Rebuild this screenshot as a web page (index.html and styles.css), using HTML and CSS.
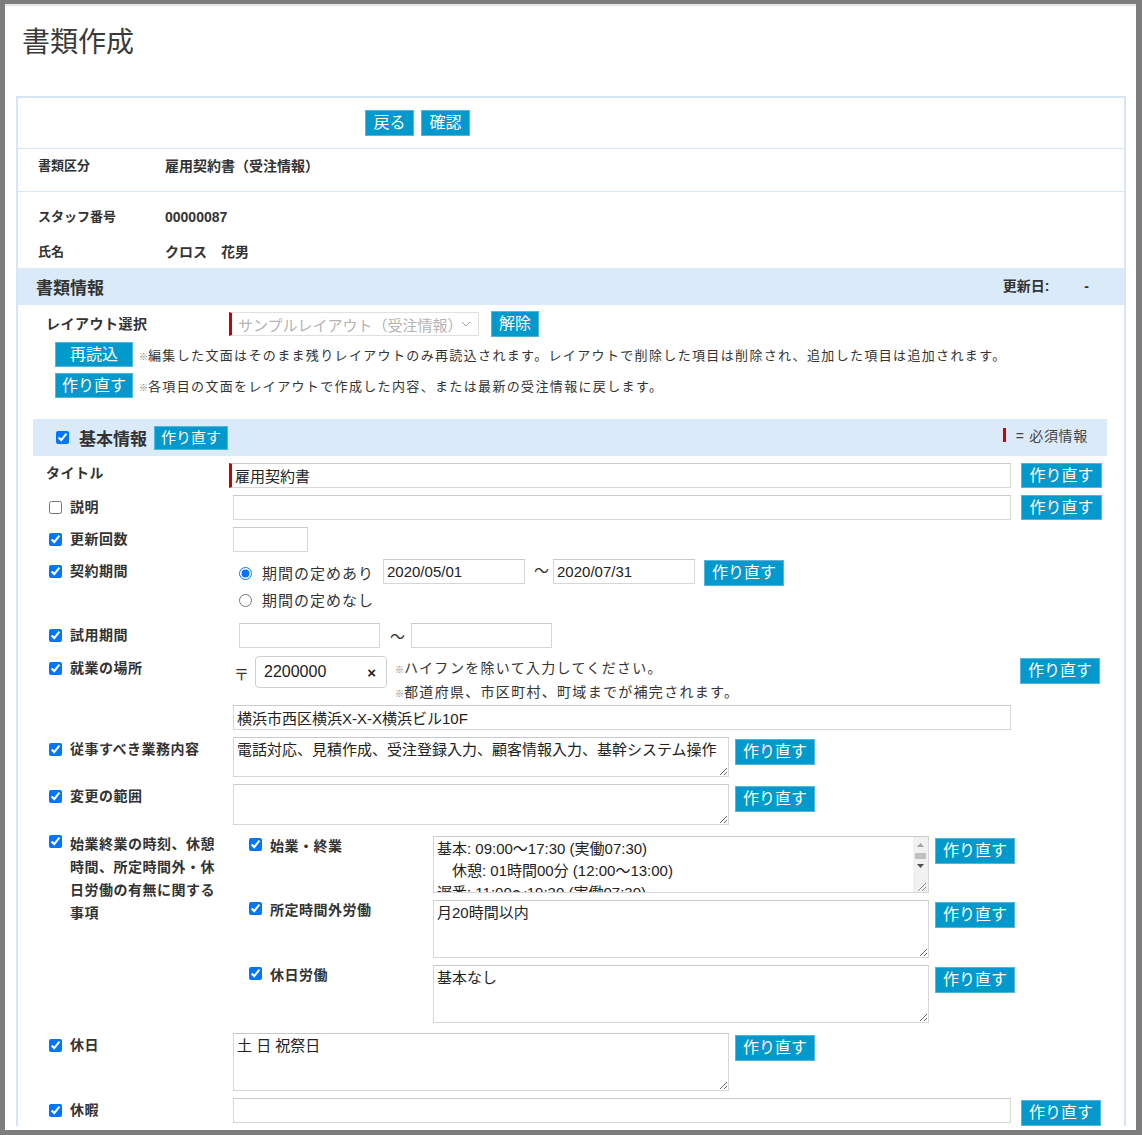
FILE: index.html
```html
<!doctype html>
<html lang="ja">
    <head>
        <meta charset="UTF-8" />
        <meta name="viewport" content="width=device-width, initial-scale=1.0" />
        <title>書類作成</title>
        <link rel="stylesheet" href="styles.css">
    </head>

    <body>
        <div class="screen">
            <h1 class="page-title">書類作成</h1>

            <div class="panel">
                <div class="panel-actions">
                    <button class="btn btn-top">戻る</button>
                    <button class="btn btn-top">確認</button>
                </div>

                <div class="info-row info-kind">
                    <span class="info-label">書類区分</span>
                    <span class="info-value">雇用契約書（受注情報）</span>
                </div>

                <div class="info-staff">
                    <div class="info-row">
                        <span class="info-label">スタッフ番号</span>
                        <span class="info-value">00000087</span>
                    </div>
                    <div class="info-row">
                        <span class="info-label">氏名</span>
                        <span class="info-value">クロス　花男</span>
                    </div>
                </div>

                <div class="section-head">
                    <span class="section-title">書類情報</span>
                    <span class="updated">更新日:<span class="updated-value">-</span></span>
                </div>

                <div class="layout-block">
                    <div class="layout-row">
                        <span class="layout-label">レイアウト選択</span>
                        <div class="fake-select required">
                            <span>サンプルレイアウト（受注情報）</span>
                            <svg width="10" height="6" viewBox="0 0 10 6"><path d="M1 1l4 4 4-4" fill="none" stroke="#9a9a9a" stroke-width="1" /></svg>
                        </div>
                        <button class="btn btn-clear">解除</button>
                    </div>
                    <div class="layout-note">
                        <button class="btn btn-wide">再読込</button>
                        <span class="note"><small>※</small>編集した文面はそのまま残りレイアウトのみ再読込されます。レイアウトで削除した項目は削除され、追加した項目は追加されます。</span>
                    </div>
                    <div class="layout-note">
                        <button class="btn btn-wide">作り直す</button>
                        <span class="note"><small>※</small>各項目の文面をレイアウトで作成した内容、または最新の受注情報に戻します。</span>
                    </div>
                </div>

                <div class="form-area">
                    <div class="group-head">
                        <label class="group-title"><input type="checkbox" checked />基本情報</label>
                        <button class="btn btn-group">作り直す</button>
                        <span class="legend"><i class="legend-bar"></i>= 必須情報</span>
                    </div>

                    <div class="row">
                        <span class="row-label plain">タイトル</span>
                        <input class="field field-wide required" type="text" value="雇用契約書" />
                        <button class="btn btn-side">作り直す</button>
                    </div>

                    <div class="row">
                        <label class="row-label"><input type="checkbox" />説明</label>
                        <input class="field field-wide" type="text" />
                        <button class="btn btn-side">作り直す</button>
                    </div>

                    <div class="row">
                        <label class="row-label"><input type="checkbox" checked />更新回数</label>
                        <input class="field field-count" type="text" />
                    </div>

                    <div class="row">
                        <label class="row-label"><input type="checkbox" checked />契約期間</label>
                        <div class="period">
                            <div class="period-line">
                                <label class="radio"><input type="radio" name="term" checked />期間の定めあり</label>
                                <input class="field field-date" type="text" value="2020/05/01" />
                                <span class="tilde">〜</span>
                                <input class="field field-date" type="text" value="2020/07/31" />
                                <button class="btn btn-inline">作り直す</button>
                            </div>
                            <div class="period-line">
                                <label class="radio"><input type="radio" name="term" />期間の定めなし</label>
                            </div>
                        </div>
                    </div>

                    <div class="row gap-lg">
                        <label class="row-label"><input type="checkbox" checked />試用期間</label>
                        <div class="trial">
                            <input class="field field-trial" type="text" />
                            <span class="tilde">〜</span>
                            <input class="field field-trial" type="text" />
                        </div>
                    </div>

                    <div class="row gap-md">
                        <label class="row-label"><input type="checkbox" checked />就業の場所</label>
                        <div class="place">
                            <div class="place-top">
                                <span class="postal-mark">〒</span>
                                <div class="zip">
                                    <span>2200000</span>
                                    <span class="zip-clear">×</span>
                                </div>
                                <div class="place-notes">
                                    <span class="note"><small>※</small>ハイフンを除いて入力してください。</span>
                                    <span class="note"><small>※</small>都道府県、市区町村、町域までが補完されます。</span>
                                </div>
                                <button class="btn btn-place">作り直す</button>
                            </div>
                            <input class="field field-wide" type="text" value="横浜市西区横浜X-X-X横浜ビル10F" />
                        </div>
                    </div>

                    <div class="row">
                        <label class="row-label"><input type="checkbox" checked />従事すべき業務内容</label>
                        <textarea class="area area-short">電話対応、見積作成、受注登録入力、顧客情報入力、基幹システム操作</textarea>
                        <button class="btn btn-area">作り直す</button>
                    </div>

                    <div class="row">
                        <label class="row-label"><input type="checkbox" checked />変更の範囲</label>
                        <textarea class="area area-short area-tall"></textarea>
                        <button class="btn btn-area">作り直す</button>
                    </div>

                    <div class="row gap-xl">
                        <label class="row-label multi"><input type="checkbox" checked /><span>始業終業の時刻、休憩時間、所定時間外・休日労働の有無に関する事項</span></label>
                        <div class="sub-rows">
                            <div class="sub-row">
                                <label class="sub-label"><input type="checkbox" checked />始業・終業</label>
                                <div class="area area-sub scroll-box">
                                    <div class="scroll-text">基本: 09:00〜17:30 (実働07:30)<br>　休憩: 01時間00分 (12:00〜13:00)<br>遅番: 11:00〜19:30 (実働07:30)</div>
                                    <svg class="scroll-bar" width="15" height="55" viewBox="0 0 15 55">
                                        <rect width="15" height="55" fill="#f1f1f1" />
                                        <path d="M4 10h7l-3.5-4z" fill="#a3a3a3" />
                                        <rect x="2" y="16" width="11" height="6" fill="#c1c1c1" />
                                        <path d="M4 27h7l-3.5 4z" fill="#505050" />
                                        <path d="M13 46l-8 8M13 50l-4 4" stroke="#8a8a8a" stroke-width="1" />
                                    </svg>
                                </div>
                                <button class="btn btn-area">作り直す</button>
                            </div>
                            <div class="sub-row">
                                <label class="sub-label"><input type="checkbox" checked />所定時間外労働</label>
                                <textarea class="area area-sub">月20時間以内</textarea>
                                <button class="btn btn-area">作り直す</button>
                            </div>
                            <div class="sub-row">
                                <label class="sub-label"><input type="checkbox" checked />休日労働</label>
                                <textarea class="area area-sub">基本なし</textarea>
                                <button class="btn btn-area">作り直す</button>
                            </div>
                        </div>
                    </div>

                    <div class="row gap-lg">
                        <label class="row-label"><input type="checkbox" checked />休日</label>
                        <textarea class="area area-short area-sub">土 日 祝祭日</textarea>
                        <button class="btn btn-area">作り直す</button>
                    </div>

                    <div class="row">
                        <label class="row-label"><input type="checkbox" checked />休暇</label>
                        <input class="field field-wide" type="text" />
                        <button class="btn btn-place">作り直す</button>
                    </div>
                </div>
            </div>
        </div>
    </body>
</html>
```

FILE: styles.css
```css
body {
    margin: 0;
    background: #7d7d7d;
    font-family: "Liberation Sans", "Noto Sans CJK JP", sans-serif;
    color: #333;
}

.screen {
    margin: 4px 6px 0 5px;
    height: 1126px;
    overflow: hidden;
    background: white;
    border-top: 2px solid #e4e8eb;
    box-sizing: border-box;
}

.page-title {
    margin: 20px 0 0 17px;
    font-size: 28px;
    line-height: 34px;
    font-weight: normal;
    color: #3a3a3a;
}

.panel {
    margin: 36px 10px 0 11px;
    border: 2px solid #d6e6f7;
    border-bottom: none;
}

/* buttons */
.btn {
    background: #0399cc;
    color: white;
    border: 1px solid #52b7de;
    font-family: inherit;
    font-size: 16px;
    height: 26px;
    line-height: 22px;
    padding: 0;
    cursor: pointer;
    flex: none;
}

.btn-top {
    width: 49px;
    margin-right: 7px;
}

.btn-clear {
    width: 48px;
    margin-left: 12px;
}

.btn-wide {
    width: 78px;
    height: 25px;
}

.btn-group {
    width: 74px;
    height: 24px;
    font-size: 15px;
    margin-left: 7px;
}

.btn-side {
    width: 81px;
    height: 25px;
    margin-left: 10px;
}

.btn-inline {
    width: 80px;
    margin: 1px 0 0 9px;
}

.btn-area {
    width: 80px;
    margin: 2px 0 0 6px;
}

.btn-place {
    width: 80px;
    margin: 2px 0 0 10px;
}

.panel-actions {
    padding: 12px 0 12px 347px;
    border-bottom: 1px solid #dae7f4;
    display: flex;
}

/* staff info */
.info-row {
    display: flex;
    font-size: 13px;
    font-weight: bold;
    line-height: 18px;
}

.info-label {
    width: 127px;
    padding-left: 20px;
}

.info-value {
    font-size: 14px;
}

.info-kind {
    padding: 8px 0 16px;
    border-bottom: 1px solid #dae7f4;
}

.info-staff {
    padding: 16px 0 7px;
    display: flex;
    flex-direction: column;
    gap: 17px;
}

.section-head {
    display: flex;
    align-items: center;
    justify-content: space-between;
    height: 37px;
    padding: 0 35px 0 18px;
    background: #dbeaf8;
}

.section-title {
    font-size: 17px;
    font-weight: bold;
}

.updated {
    font-size: 14px;
    font-weight: bold;
    margin-top: -4px;
}

.updated-value {
    margin-left: 35px;
}

/* layout choice */
.layout-block {
    padding: 6px 0 21px 28px;
}

.layout-row {
    display: flex;
    align-items: center;
    height: 26px;
}

.layout-label {
    width: 183px;
    font-size: 14px;
    font-weight: bold;
    letter-spacing: 0.5px;
    margin-top: -3px;
}

.fake-select {
    width: 250px;
    height: 24px;
    box-sizing: border-box;
    display: flex;
    align-items: center;
    justify-content: space-between;
    padding: 0 7px 0 6px;
    border: 1px solid #e0e0e0;
    color: #b4b4b4;
    font-size: 15px;
}

.layout-note {
    display: flex;
    align-items: center;
    margin: 5px 0 0 9px;
}

.layout-note + .layout-note {
    margin-top: 6px;
}

.note {
    font-size: 13px;
    letter-spacing: 1.35px;
    margin-left: 6px;
    color: #333;
}

.note small {
    font-size: 9px;
    line-height: 1;
    color: #777;
    letter-spacing: 0;
}

/* form */
.form-area {
    margin: 0 17px 0 15px;
}

.group-head {
    display: flex;
    align-items: center;
    height: 37px;
    padding: 0 19px 0 23px;
    background: #dbeaf8;
}

.group-title {
    display: flex;
    align-items: center;
    font-size: 17px;
    font-weight: bold;
}

.group-title input {
    margin: 0 10px 0 0;
    width: 13px;
    height: 13px;
}

.legend {
    margin-left: auto;
    display: flex;
    align-items: center;
    font-size: 14px;
    letter-spacing: 0.7px;
    color: #444;
    margin-top: -6px;
}

.legend-bar {
    width: 3px;
    height: 14px;
    background: #d40000;
    margin-right: 10px;
}

.row {
    display: flex;
    align-items: flex-start;
    margin-top: 7px;
    padding-left: 13px;
}

.gap-md {
    margin-top: 8px;
}

.gap-lg {
    margin-top: 10px;
}

.gap-xl {
    margin-top: 11px;
}

.row-label,
.sub-label {
    display: flex;
    align-items: center;
    flex: none;
    font-size: 14px;
    font-weight: bold;
    letter-spacing: 0.5px;
    line-height: 20px;
    padding-top: 2px;
}

.row-label {
    width: 187px;
}

.row-label.plain {
    padding-top: 0;
}

.row-label input,
.sub-label input {
    margin: 0 8px 0 3px;
    width: 13px;
    height: 13px;
}

.row-label.multi {
    align-items: flex-start;
    line-height: 23px;
    margin-top: -5px;
}

.row-label.multi input {
    margin-top: 2px;
}

.row-label.multi span {
    width: 152px;
}

.field {
    height: 25px;
    box-sizing: border-box;
    border: 1px solid #d6d6d6;
    border-top-color: #c9c9c9;
    font-family: inherit;
    font-size: 15px;
    color: #222;
    padding: 0 3px;
    flex: none;
}

.field-wide {
    width: 778px;
}

.required {
    border-left: 3px solid #cc0000;
}

.field.required {
    width: 782px;
    margin-left: -4px;
}

.field-count {
    width: 75px;
}

.field-date {
    width: 142px;
}

.field-trial {
    width: 141px;
}

.tilde {
    font-size: 15px;
    margin: 0 4px 0 9px;
}

.period-line {
    display: flex;
    align-items: flex-start;
    height: 27px;
}

.radio {
    display: flex;
    align-items: center;
    font-size: 15px;
    letter-spacing: 1px;
    height: 26px;
    width: 150px;
}

.radio input {
    margin: 3px 10px 0 6px;
}

.trial {
    display: flex;
    align-items: center;
    margin-left: 6px;
}

.trial .tilde {
    margin: 0 6px 0 10px;
}

.place-top {
    display: flex;
    align-items: flex-start;
}

.postal-mark {
    font-size: 15px;
    margin: 7px 6px 0 1px;
}

.zip {
    width: 132px;
    height: 32px;
    box-sizing: border-box;
    border: 1px solid #cfcfcf;
    border-radius: 4px;
    display: flex;
    align-items: center;
    justify-content: space-between;
    padding: 0 10px 0 8px;
    font-size: 16px;
    color: #222;
}

.zip-clear {
    font-weight: bold;
    font-size: 15px;
}

.place-notes {
    display: flex;
    flex-direction: column;
    width: 621px;
    margin: 0 0 1px 2px;
}

.place-notes .note {
    display: block;
    height: 24px;
    line-height: 24px;
    font-size: 14px;
    letter-spacing: 1.3px;
}

.area {
    box-sizing: border-box;
    border: 1px solid #d6d6d6;
    border-top-color: #c9c9c9;
    font-family: inherit;
    font-size: 15px;
    line-height: 22px;
    color: #222;
    padding: 1px 3px;
    margin: 0;
    flex: none;
}

.area-short {
    width: 496px;
    height: 40px;
}

.area-tall {
    height: 41px;
}

.area-sub {
    width: 496px;
    height: 58px;
}

/* hours box: text with a classic scrollbar down its right side */
.scroll-box {
    height: 57px;
    display: flex;
    padding: 0;
}

.scroll-text {
    flex: 1;
    overflow: hidden;
    padding: 1px 3px;
    white-space: nowrap;
}

.scroll-bar {
    flex: none;
}

.sub-rows {
    display: flex;
    flex-direction: column;
    gap: 7px;
}

.sub-row {
    display: flex;
    align-items: flex-start;
}

.sub-label {
    width: 200px;
    padding-top: 0;
}

.sub-label input {
    margin-left: 16px;
    margin-top: -3px;
}
```
